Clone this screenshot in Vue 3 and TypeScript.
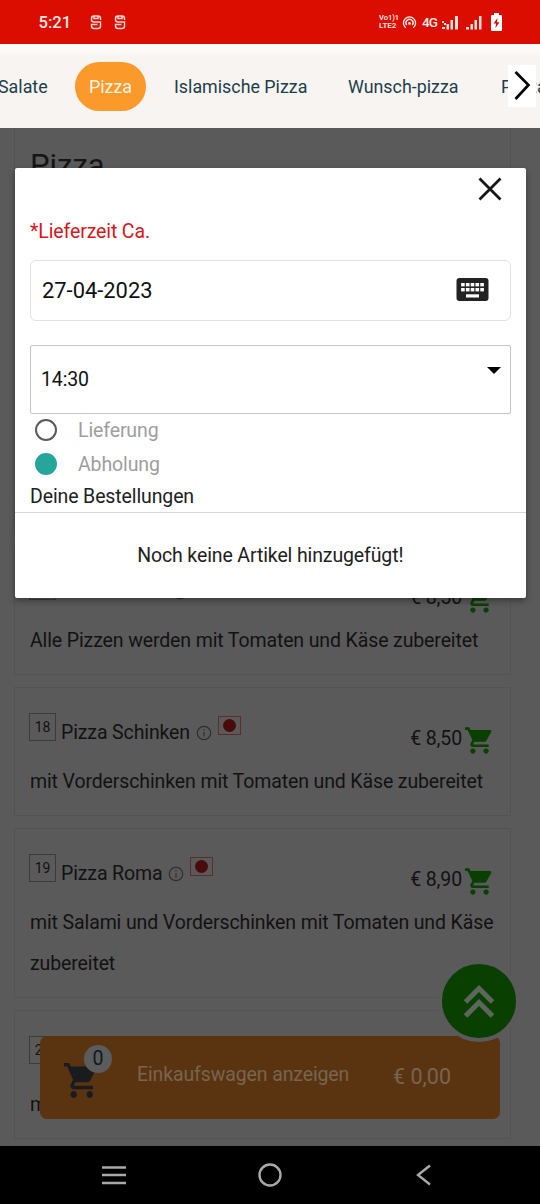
<script setup lang="ts">
interface Dish {
  no: string
  name: string
  price: string
  text: string
}

const dishes: Dish[] = [
  { no: '17', name: 'Pizza Tonno', price: '€ 8,50', text: 'Alle Pizzen werden mit Tomaten und Käse zubereitet' },
  { no: '18', name: 'Pizza Schinken', price: '€ 8,50', text: 'mit Vorderschinken mit Tomaten und Käse zubereitet' },
  { no: '19', name: 'Pizza Roma', price: '€ 8,90', text: 'mit Salami und Vorderschinken mit Tomaten und Käse zubereitet' },
  { no: '20', name: '', price: '', text: 'mit' },
]
const keys: number[] = [0, 1, 2, 3, 4]
const cartPath =
  'M7 18c-1.1 0-1.99.9-1.99 2S5.9 22 7 22s2-.9 2-2-.9-2-2-2zM1 2v2h2l3.6 7.59-1.35 2.45c-.16.28-.25.61-.25.96 0 1.1.9 2 2 2h12v-2H7.42c-.14 0-.25-.11-.25-.25l.03-.12.9-1.63h7.45c.75 0 1.41-.41 1.75-1.03l3.58-6.49c.08-.14.12-.31.12-.48 0-.55-.45-1-1-1H5.21l-.94-2H1zm16 16c-1.1 0-1.99.9-1.99 2s.89 2 1.99 2 2-.9 2-2-.9-2-2-2z'
</script>

<template>
  <div class="screen">
    <header class="status">
      <span class="clock">5:21</span>
      <svg v-for="n in 2" :key="n" class="app-mark" viewBox="0 0 12 15">
        <path d="M10.500 5V3.500Q10.500 1 8 1H4Q1.500 1 1.500 3.500V4.500Q1.500 7 4 7H10.500V11Q10.500 13.500 8 13.500H4Q1.500 13.500 1.500 11V9.500H7.500M4 1.500V3.500H8V1.500" />
      </svg>
      <span class="spacer"></span>
      <span class="volte"><span>Vo1)1</span><span>LTE2</span></span>
      <svg class="hotspot" viewBox="0 0 16 14">
        <path d="M4 12.600A6.500 6.500 0 1 1 12 12.600M5 9.800A3.800 3.800 0 1 1 11 9.800" />
        <circle cx="8" cy="8" r="1.500" />
      </svg>
      <span class="net">4G</span>
      <svg class="bars bars-one" viewBox="0 0 16 15">
        <path d="M0 6h2v2H0zM2 8h2v2H2zM0 12h3v2H0zM4.500 9h2.500v5.500H4.500zM8.500 5h2.500v9.500H8.500zM13 1h3v13.500h-3z" />
      </svg>
      <svg class="bars bars-two" viewBox="0 0 16 15">
        <path d="M0 12h3v2.500H0zM4.500 9h2.500v5.500H4.500zM8.500 5h2.500v9.500H8.500zM13 1h2.500v13.500h-2.500z" />
      </svg>
      <svg class="battery" viewBox="0 0 11 18">
        <path class="cell" d="M3 2V0h5v2h2q1 0 1 1v14q0 1-1 1H1q-1 0-1-1V3q0-1 1-1z" />
        <path class="bolt" d="M6.500 5L2.500 10.500H5L4.500 15L8.500 9.200H6z" />
      </svg>
    </header>

    <nav class="tabs">
      <span class="tab tab-salate">Salate</span>
      <span class="tab pill">Pizza</span>
      <span class="tab tab-isl">Islamische Pizza</span>
      <span class="tab tab-wunsch">Wunsch-pizza</span>
      <span class="tab tab-pasta">Pasta</span>
      <span class="next">
        <svg viewBox="0 0 28 42"><path d="M7.500 7L20.500 20L7.500 34" /></svg>
      </span>
    </nav>

    <main class="content">
      <section class="intro"><h1>Pizza</h1></section>
      <article v-for="d in dishes" :key="d.no" class="card">
        <div class="head">
          <span class="no">{{ d.no }}</span>
          <span class="name">{{ d.name }}</span>
          <template v-if="d.name">
            <svg class="info" viewBox="0 0 16 16">
              <circle cx="8" cy="8" r="6.700" />
              <path d="M8 7V11.500M8 4.300V5.700" />
            </svg>
            <span class="flag"><i></i></span>
            <span class="price">{{ d.price }}</span>
            <svg class="add" viewBox="1 2 20.500 20"><path :d="cartPath" /></svg>
          </template>
        </div>
        <p class="desc">{{ d.text }}</p>
      </article>

      <div class="cart-bar">
        <span class="cart-icon">
          <svg viewBox="1 2 20.500 20" preserveAspectRatio="none"><path :d="cartPath" /></svg>
          <b>0</b>
        </span>
        <span class="show">Einkaufswagen anzeigen</span>
        <span class="total">€ 0,00</span>
      </div>
      <button class="to-top" type="button">
        <svg viewBox="0 0 32 34"><path d="M2.500 18L16 4.500L29.500 18M2.500 32L16 18.500L29.500 32" /></svg>
      </button>
    </main>

    <section class="modal">
      <div class="modal-body">
        <div class="close-row">
          <svg viewBox="0 0 24 24"><path d="M1.500 1.500L22.500 22.500M22.500 1.500L1.500 22.500" /></svg>
        </div>
        <p class="label">*Lieferzeit Ca.</p>
        <div class="date">
          <span>27-04-2023</span>
          <svg viewBox="0 0 32 23">
            <rect width="32" height="23" rx="3" fill="#222" />
            <template v-for="k in keys" :key="k">
              <rect :x="4.600 + k * 4.800" y="5" width="3.600" height="3.400" fill="#fff" />
              <rect :x="4.600 + k * 4.800" y="10" width="3.600" height="3.400" fill="#fff" />
            </template>
            <rect x="9.500" y="16.300" width="13" height="3.200" fill="#fff" />
          </svg>
        </div>
        <div class="time">
          <span>14:30</span>
          <svg viewBox="0 0 14 7"><path d="M0 0H14L7 7Z" /></svg>
        </div>
        <div class="options">
          <label class="option"><i class="radio"></i>Lieferung</label>
          <label class="option"><i class="radio on"></i>Abholung</label>
        </div>
        <p class="orders">Deine Bestellungen</p>
      </div>
      <p class="empty">Noch keine Artikel hinzugefügt!</p>
    </section>

    <footer class="system">
      <svg class="menu" viewBox="0 0 24 20"><path d="M0 2.500H24M0 10H24M0 18H24" /></svg>
      <svg class="home" viewBox="0 0 24 24"><circle cx="12" cy="12" r="10.500" /></svg>
      <svg class="back" viewBox="0 0 16 22"><path d="M14 1.500L2 11L14 20.500" /></svg>
    </footer>
  </div>
</template>

<style>
body {
  margin: 0;
}
</style>

<style scoped>
.screen {
  position: relative;
  width: 540px;
  height: 1204px;
  overflow: hidden;
  display: flex;
  flex-direction: column;
  background: #5a5a5a;
  font-family: Roboto, "Liberation Sans", sans-serif;
  font-size: 19.5px;
  letter-spacing: -0.12px;
  color: #121212;
}
.screen * {
  box-sizing: border-box;
}
svg {
  flex: none;
  display: block;
}
p,
h1 {
  margin: 0;
  font-weight: 400;
}
.status {
  height: 44px;
  flex: none;
  display: flex;
  align-items: center;
  padding: 0 38px 0 38.5px;
  background: #da0d00;
  color: #ffe9e4;
  letter-spacing: 0;
}
.clock {
  width: 51.5px;
  font-size: 16.6px;
  font-weight: 500;
  line-height: 44px;
  padding-top: 1px;
}
.app-mark {
  width: 12px;
  height: 15px;
  margin-right: 12px;
  fill: none;
  stroke: #ffd5cd;
  stroke-width: 1.5;
}
.spacer {
  flex: 1;
}
.volte {
  width: 20px;
  display: flex;
  flex-direction: column;
  font-size: 8px;
  font-weight: 600;
  line-height: 8px;
  white-space: nowrap;
}
.volte span:first-child {
  font-size: 7.5px;
}
.hotspot {
  width: 15px;
  height: 13px;
  margin-left: 3px;
  fill: none;
  stroke: #ffe9e4;
  stroke-width: 1.5;
}
.hotspot circle {
  fill: #ffe9e4;
  stroke: none;
}
.net {
  width: 20px;
  margin-left: 5px;
  font-size: 13.5px;
  font-weight: 500;
  letter-spacing: -0.9px;
  white-space: nowrap;
}
.bars {
  height: 15px;
  fill: #ffe0da;
}
.bars-one {
  width: 16px;
}
.bars-two {
  width: 16px;
  margin-left: 8px;
}
.battery {
  width: 11px;
  height: 18px;
  margin-left: 9px;
}
.cell {
  fill: #fff;
}
.bolt {
  fill: #da0d00;
}
.tabs {
  position: relative;
  height: 84px;
  flex: none;
  display: flex;
  align-items: center;
  overflow: hidden;
  background: linear-gradient(#fdf9f7 0, #fdf9f7 8px, #f8f4f2 11px);
  color: #1e3f4a;
  font-size: 17.85px;
  letter-spacing: 0;
  line-height: 50px;
  white-space: nowrap;
}
.tab {
  flex: none;
  padding-top: 1px;
}
.tab-salate {
  width: 77px;
  margin-left: -2px;
}
.pill {
  width: 71px;
  height: 49px;
  padding: 0;
  border-radius: 25px;
  text-align: center;
  background: #fc992b;
  color: #fff5e8;
}
.tab-isl {
  width: 174px;
  margin-left: 28px;
}
.tab-wunsch {
  width: 153px;
}
.next {
  position: absolute;
  left: 508px;
  top: 21px;
  width: 28px;
  height: 42px;
  background: #fff;
}
.next path {
  fill: none;
  stroke: #050505;
  stroke-width: 2.7;
}
.content {
  position: relative;
  height: 1018px;
  flex: none;
  overflow: hidden;
  padding: 0 29px 0 14px;
}
.intro {
  height: 406px;
  border: 1px solid #535353;
  border-top: 0;
  padding: 19px 15px;
}
h1 {
  font-size: 31px;
  line-height: 38px;
  letter-spacing: 0;
  color: #151515;
}
.card {
  margin-top: 12px;
  padding: 0 14px 13px 15px;
  border: 1px solid #535353;
}
.head {
  height: 73px;
  display: flex;
  align-items: flex-start;
}
.no {
  width: 27px;
  height: 28px;
  margin: 25px 5px 0 -1px;
  border: 1px solid #3b3b3b;
  font-size: 14px;
  line-height: 27px;
  text-align: center;
}
.name {
  margin-top: 33px;
  line-height: 24px;
}
.info {
  width: 16px;
  height: 16px;
  margin: 37px 0 0 6px;
  fill: none;
  stroke: #303030;
  stroke-width: 1.2;
}
.flag {
  width: 23px;
  height: 19px;
  margin: 28px 0 0 6px;
  border: 1px solid #5c2c2e;
  display: grid;
  place-items: center;
}
.flag i {
  width: 13px;
  height: 13px;
  border-radius: 50%;
  background: #480c0d;
}
.price {
  margin: 38.5px 0 0 auto;
  line-height: 24px;
}
.add {
  width: 27px;
  height: 27px;
  margin: 39px 4px 0 3px;
  fill: #093f00;
}
.desc {
  line-height: 41px;
}
.cart-bar {
  position: absolute;
  left: 40px;
  top: 908px;
  width: 460px;
  height: 83px;
  border-radius: 7px;
  background: #5a3410;
  display: flex;
  align-items: center;
  color: #776550;
}
.cart-icon {
  position: relative;
  width: 97px;
  height: 83px;
  flex: none;
  padding: 27px 0 0 24px;
}
.cart-icon svg {
  width: 33px;
  height: 35px;
  fill: #181c1f;
}
.cart-icon b {
  position: absolute;
  left: 44px;
  top: 9px;
  width: 28px;
  height: 28px;
  border-radius: 50%;
  background: #5b5c5e;
  color: #101820;
  font-weight: 400;
  line-height: 27px;
  text-align: center;
}
.show {
  margin-top: -7px;
}
.total {
  margin: -3px 49px 0 auto;
  font-size: 21.5px;
  letter-spacing: 0;
}
.to-top {
  position: absolute;
  left: 437.5px;
  top: 832px;
  width: 82px;
  height: 82px;
  border: 4px solid #5a5a5a;
  border-radius: 50%;
  background: #093f00;
  display: grid;
  place-items: center;
  padding: 0;
}
.to-top svg {
  width: 32px;
  height: 34px;
}
.to-top path {
  fill: none;
  stroke: #5d665a;
  stroke-width: 5;
}
.modal {
  position: absolute;
  left: 15px;
  top: 168px;
  width: 510.5px;
  height: 430px;
  border-radius: 2px;
  background: #fff;
  box-shadow: 0 3px 6px rgba(0, 0, 0, 0.35);
}
.modal-body {
  height: 345px;
  padding: 0 15px;
  border-bottom: 1px solid #d6d6d6;
}
.close-row {
  height: 49px;
  display: flex;
  justify-content: flex-end;
  padding: 8.5px 8.5px 0 0;
}
.close-row svg {
  width: 24px;
  height: 24px;
}
.close-row path {
  stroke: #161616;
  stroke-width: 2.8;
}
.label {
  height: 43px;
  line-height: 29px;
  color: #d9161b;
}
.date {
  height: 61px;
  display: flex;
  align-items: center;
  justify-content: space-between;
  padding: 0 20.5px 1px 11px;
  border: 1px solid #e2e2e2;
  border-radius: 6px;
  font-size: 21.9px;
  letter-spacing: 0;
  color: #111;
}
.date svg {
  width: 33px;
  height: 23px;
  margin-top: -2px;
}
.time {
  height: 69px;
  margin-top: 24px;
  display: flex;
  justify-content: space-between;
  padding: 0 9px 0 10px;
  border: 1px solid #c4c4c4;
  border-radius: 2px;
  line-height: 67px;
}
.time svg {
  width: 14px;
  height: 7px;
  margin-top: 21px;
}
.options {
  margin: -1px 0 1px;
}
.option {
  display: flex;
  align-items: center;
  height: 34px;
  padding-left: 5px;
  color: #9e9e9e;
}
.radio {
  width: 22px;
  height: 22px;
  margin-right: 21px;
  border: 2px solid #5a5a5a;
  border-radius: 50%;
}
.radio.on {
  border-color: #26a69a;
  background: #26a69a;
}
.orders {
  line-height: 29px;
  color: #212121;
}
.empty {
  line-height: 85px;
  text-align: center;
  color: #212121;
}
.system {
  position: relative;
  height: 58px;
  flex: none;
  display: flex;
  align-items: center;
  padding: 0 108px 0 102px;
  justify-content: space-between;
  background: #000;
}
.system svg {
  fill: none;
  stroke: #a9a9a9;
  stroke-width: 2.4;
}
.menu {
  width: 24px;
  height: 20px;
}
.home {
  width: 24px;
  height: 24px;
  margin-right: 2px;
}
.back {
  width: 16px;
  height: 22px;
}
</style>
